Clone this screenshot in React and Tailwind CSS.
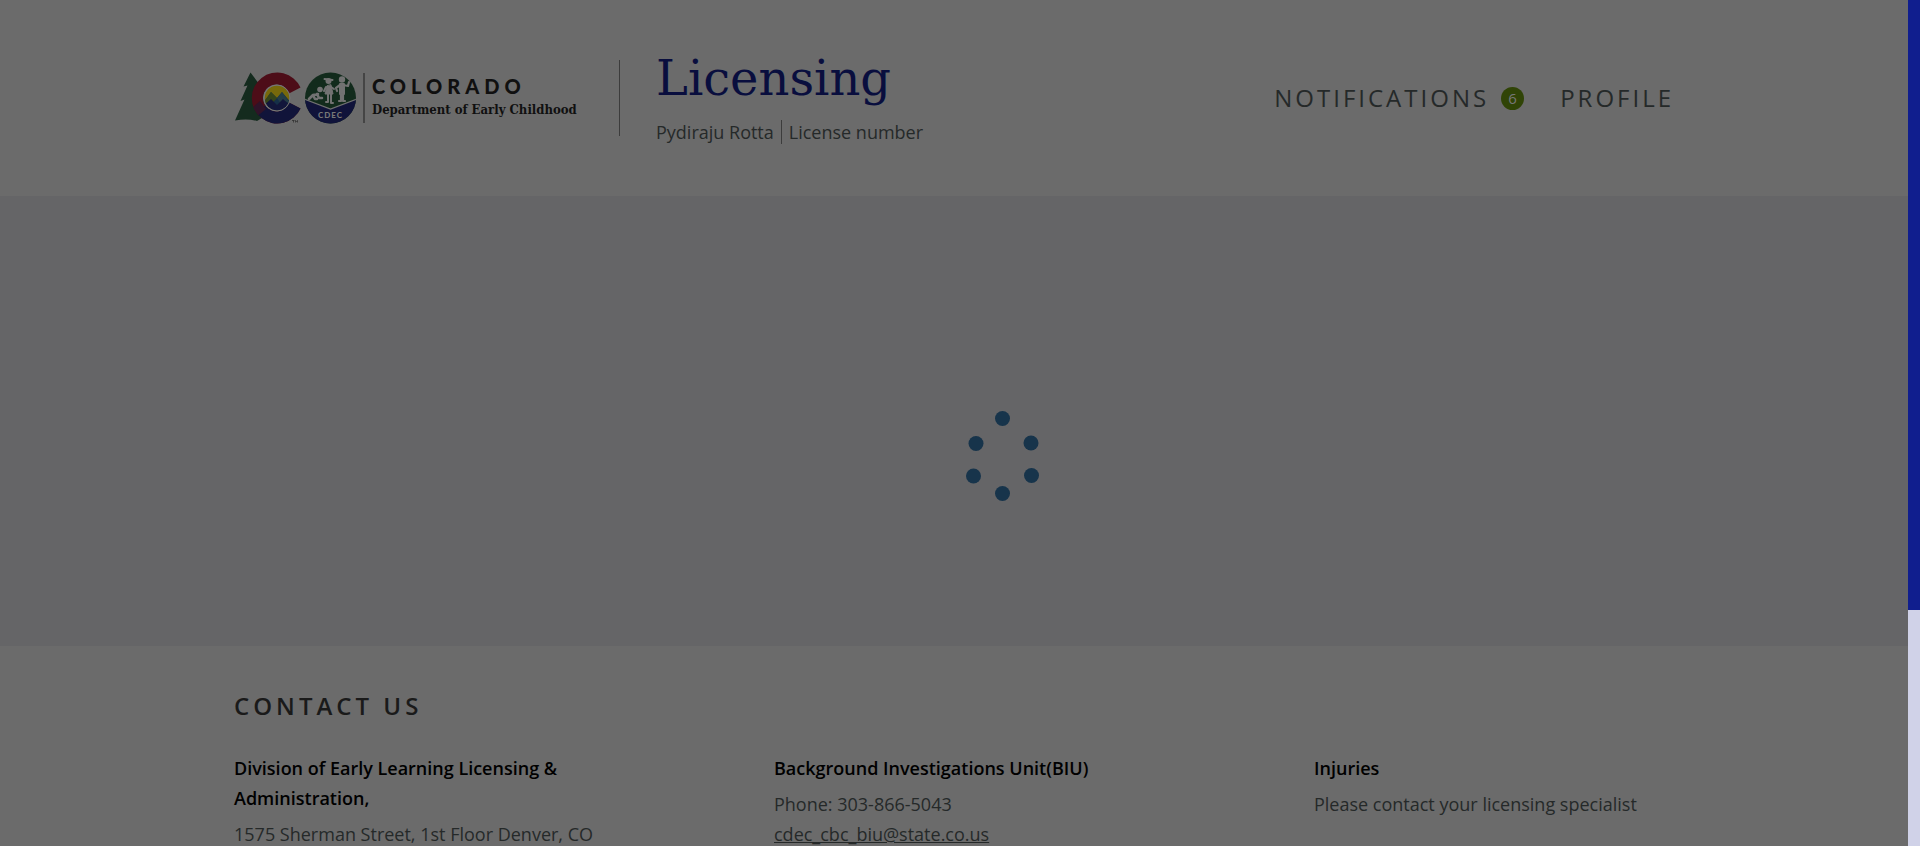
import React from "react";

function Emblem() {
  return (
    <svg viewBox="0 0 124 54" className="h-[54px] w-[124px] shrink-0" role="img" aria-label="State emblem">
      <defs>
        <clipPath id="inner"><circle cx="43" cy="27" r="12.5" /></clipPath>
        <clipPath id="seal"><circle cx="96.500" cy="27" r="25.5" /></clipPath>
        <clipPath id="ring">
          <path d="M66.500 16.500A25.500 25.500 0 1 0 66.500 37.500L55 31.500A13.500 13.500 0 1 1 55 22.500Z" />
        </clipPath>
      </defs>
      <path d="M16.500 1.500L9.500 15.500l4-1L6.500 30l4-1.500L1 49.500c8-1.500 15-1.500 22 .5l10-6V20l-8-6 .5-.5Z" fill="#142b1e" />
      <circle cx="43" cy="27" r="14" fill="#6b6b6b" />
      <g clipPath="url(#ring)">
        <rect x="15" width="55" height="54" fill="#4d0d18" />
        <path d="M20 47L34 31h36v23H20Z" fill="#11143a" />
        <path d="M18 37l8-7 6 8-11 9Z" fill="#301329" />
      </g>
      <g clipPath="url(#inner)">
        <rect x="30" y="14" width="26" height="26" fill="#77690b" />
        <path d="M29 32l8-11 6 6 5-6 10 12v11H29Z" fill="#152f48" />
        <path d="M29 32l8-11 6 6-8 9Z" fill="#354519" />
        <path d="M43 27l5-6 8 11-6-2-3 3Z" fill="#243d46" />
        <path d="M29 35l8-7 6 6 6-6 9 8v10H29Z" fill="#12163b" />
      </g>
      <circle cx="43" cy="27" r="13" fill="none" stroke="#777" strokeWidth="1" />
      <path d="M58 49.500h2.500M59.500 49.500v2M61.500 51.500v-2l1 1 1-1v2" stroke="#282828" strokeWidth=".7" fill="none" />
      <g clipPath="url(#seal)">
        <rect x="70" width="54" height="54" fill="#122b1c" />
        <path d="M70 28l26.500 10L123 28v26H70Z" fill="#10133a" />
        <path d="M70 28l26.500 10L123 28" fill="none" stroke="#717171" strokeWidth="1.300" />
      </g>
      <g fill="#727272" stroke="#727272" strokeLinecap="round" strokeLinejoin="round">
        <circle cx="86" cy="18.500" r="2.800" stroke="none" />
        <path d="M84 23l-5 1-4 4M83 23l2 4h3M79 24l2 4h2" fill="none" strokeWidth="2.600" />
        <circle cx="94.500" cy="10" r="3" stroke="none" />
        <path d="M90.500 8l8 1" fill="none" strokeWidth="2" />
        <path d="M93 15l-2 8h8l-2-9Z" strokeWidth="1" />
        <path d="M97 16l3 2M92 16l-2 4M94 23v8h-2M97 23v9h2" fill="none" strokeWidth="2" />
        <circle cx="108" cy="8.500" r="3.200" stroke="none" />
        <path d="M106 13v10h4V13Z" strokeWidth="2" />
        <path d="M109 14l5 1 1-4M106 14l-4 3 1 3M107 23v7h-2M109 23v7h2" fill="none" strokeWidth="2.200" />
      </g>
      <text x="96.500" y="47" textAnchor="middle" fontFamily="Lato, sans-serif" fontWeight="900" fontSize="8" letterSpacing="1" fill="#777">CDEC</text>
    </svg>
  );
}

function Logo() {
  return (
    <a href="#home" className="flex w-[349px] shrink-0 items-center">
      <Emblem />
      <span className="ml-[5px] h-[50px] w-[2px] bg-[#454545]" />
      <span className="ml-[7px] flex flex-col text-[#101010]">
        <span className="font-[Lato,sans-serif] text-[20px] font-black leading-6 tracking-[5px]">COLORADO</span>
        <span className="whitespace-nowrap font-['DejaVu_Serif_Condensed','DejaVu_Serif',serif] text-[13px] font-bold leading-6">Department of Early Childhood</span>
      </span>
    </a>
  );
}

function Header() {
  return (
    <header className="h-[196px]">
      <div className="mx-auto flex h-full max-w-[1440px] items-center">
        <Logo />
        <div className="ml-9 h-[76px] w-px bg-[#3c3c3c]" />
        <div className="ml-9 flex flex-col pb-1">
          <h1 className="mb-3 font-['DejaVu_Serif',serif] text-[48px] leading-[60px] text-[#090e3e]">Licensing</h1>
          <div className="flex items-center text-[18px] leading-6 text-[#252929]">
            <span>Pydiraju Rotta</span>
            <span className="mx-[7px] h-6 w-px bg-[#3c3c3c]" />
            <span>License number</span>
          </div>
        </div>
        <nav className="ml-auto flex items-center gap-9 text-[24px] leading-8 tracking-[3px] text-[#252929]">
          <a href="#notifications" className="flex items-center gap-3">
            NOTIFICATIONS
            <span className="flex size-[23px] items-center justify-center rounded-full bg-[#304406] text-[15px] leading-5 tracking-normal text-[#777]">6</span>
          </a>
          <a href="#profile">PROFILE</a>
        </nav>
      </div>
    </header>
  );
}

function Spinner() {
  const dots = [[48.5, 7.5], [77, 32], [77.5, 64.5], [48.5, 82.5], [19.5, 65], [22, 32.5]];
  return (
    <svg role="status" aria-label="Loading" viewBox="0 0 96 90" className="absolute left-1/2 top-[411px] h-[90px] w-[96px]">
      {dots.map(([x, y]) => <circle key={x + "-" + y} cx={x} cy={y} r="7.5" fill="#17344b" />)}
    </svg>
  );
}

function Contact({ title, children }) {
  return (
    <section>
      <h3 className="font-semibold text-black">{title}</h3>
      <div className="mt-[6px]">{children}</div>
    </section>
  );
}

function Footer() {
  return (
    <footer className="pt-11">
      <div className="mx-auto max-w-[1440px] text-[18px] leading-[30px] text-[#252929]">
        <h2 className="text-[24px] font-semibold leading-8 tracking-[4px] text-[#1a1a1a]">CONTACT US</h2>
        <div className="mt-[31px] grid grid-cols-3 gap-[180px]">
          <Contact title="Division of Early Learning Licensing & Administration,">
            <p className="whitespace-nowrap">1575 Sherman Street, 1st Floor Denver, CO</p>
          </Contact>
          <Contact title="Background Investigations Unit(BIU)">
            <p>Phone: 303-866-5043</p>
            <a href="mailto:cdec_cbc_biu@state.co.us" className="underline">cdec_cbc_biu@state.co.us</a>
          </Contact>
          <Contact title="Injuries">
            <p>Please contact your licensing specialist</p>
          </Contact>
        </div>
      </div>
    </footer>
  );
}

export default function App() {
  return (
    <div className="flex h-screen overflow-hidden bg-[#6b6b6b] font-['Open_Sans',sans-serif]">
      <div className="relative min-w-0 flex-1 overflow-hidden">
        <Header />
        <main className="h-[450px] bg-[#656567]" />
        <Footer />
        <Spinner />
      </div>
      <div className="w-3 bg-[#d0d2e8]">
        <div className="h-[72.1%] bg-[#101e8e]" />
      </div>
    </div>
  );
}
